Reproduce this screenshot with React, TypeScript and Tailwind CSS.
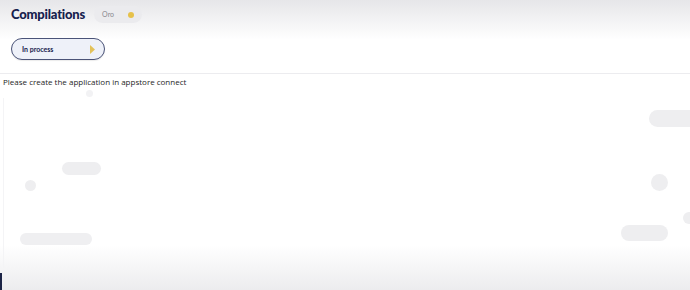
import React from 'react';

const Blob: React.FC<{ className: string }> = ({ className }) => (
  <div className={`absolute rounded-full bg-[#eeeef0] ${className}`} />
);

const App: React.FC = () => {
  return (
    <div
      className="relative w-[690px] h-[290px] overflow-hidden bg-white"
      style={{ fontFamily: '"Lato", "Noto Sans", sans-serif' }}
    >
      {/* top shade */}
      <div className="absolute inset-x-0 top-0 h-[40px] bg-gradient-to-b from-[#e6e6e9] to-white" />
      {/* bottom shade */}
      <div className="absolute inset-x-0 bottom-0 h-[45px] bg-gradient-to-b from-white to-[#ececee]" />

      <div className="relative flex flex-col">
        <div className="flex items-center gap-[9px] h-[28px] pl-[11px] pt-[1px]">
          <h1 className="text-[13px] font-black text-[#17214d] tracking-[-0.2px]">Compilations</h1>
          <div className="flex items-center h-[17px] w-[48px] rounded-full bg-[#ebebee] pl-[8px] pr-[8px]">
            <span className="text-[7px] text-[#8a8a90]">Oro</span>
            <span className="ml-auto w-[6px] h-[6px] rounded-full bg-[#e6c14a]" />
          </div>
        </div>

        <div className="pl-[11px] pt-[10px] pb-[13px]">
          <div className="flex items-center w-[94px] h-[22px] rounded-full border border-[#4a5378] bg-[#eef1f9] pl-[10px] pr-[9px] shadow-[0_1px_1px_rgba(0,0,0,0.08)]">
            <span className="text-[7px] font-bold text-[#17214d]">In process</span>
            <svg className="ml-auto" width="5" height="9" viewBox="0 0 5 9">
              <path d="M0 0 L5 4.5 L0 9 Z" fill="#e3c25a" />
            </svg>
          </div>
        </div>

        <div className="h-px bg-[#ececef]" />

        <p
          className="pl-[3px] pt-[2px] text-[8px] text-[#1e1e1e] leading-[12px]"
          style={{ fontFamily: '"Open Sans", "Noto Sans", sans-serif' }}
        >
          Please create the application in appstore connect
        </p>
      </div>

      {/* faint loading placeholders */}
      <Blob className="left-[86px] top-[90px] w-[7px] h-[7px] bg-[#f2f2f4]" />
      <Blob className="left-[62px] top-[162px] w-[39px] h-[13px]" />
      <Blob className="left-[25px] top-[180px] w-[11px] h-[11px]" />
      <Blob className="left-[20px] top-[233px] w-[72px] h-[12px] bg-[#efeff1]" />
      <Blob className="left-[649px] top-[110px] w-[50px] h-[17px]" />
      <Blob className="left-[651px] top-[174px] w-[17px] h-[17px]" />
      <Blob className="left-[683px] top-[212px] w-[12px] h-[12px]" />
      <Blob className="left-[621px] top-[225px] w-[47px] h-[16px]" />

      <div className="absolute left-[3px] top-[98px] w-px h-[170px] bg-[#f4f4f6]" />
      <div className="absolute left-0 top-[273px] w-[2px] h-[17px] bg-[#1c2446]" />
    </div>
  );
};

export default App;
